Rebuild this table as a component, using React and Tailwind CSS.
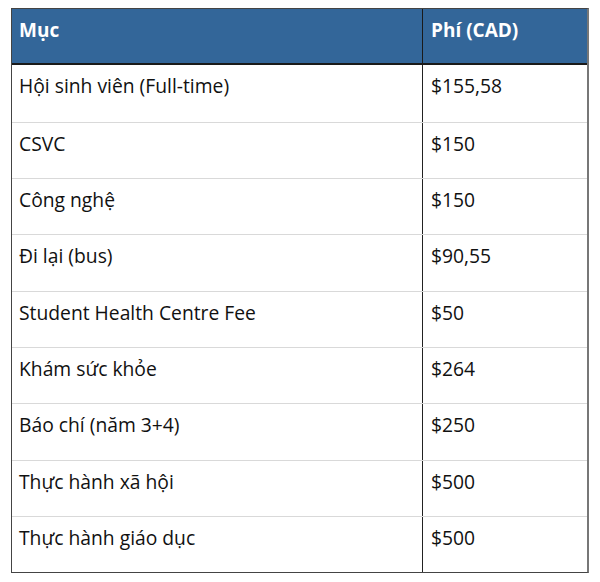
const rows = [
  { item: 'Hội sinh viên (Full-time)', fee: '$155,58', h: 'h-[57px]' },
  { item: 'CSVC', fee: '$150', h: 'h-[56px]' },
  { item: 'Công nghệ', fee: '$150', h: 'h-[56px]' },
  { item: 'Đi lại (bus)', fee: '$90,55', h: 'h-[57px]' },
  { item: 'Student Health Centre Fee', fee: '$50', h: 'h-[56px]' },
  { item: 'Khám sức khỏe', fee: '$264', h: 'h-[56px]' },
  { item: 'Báo chí (năm 3+4)', fee: '$250', h: 'h-[57px]' },
  { item: 'Thực hành xã hội', fee: '$500', h: 'h-[56px]' },
  { item: 'Thực hành giáo dục', fee: '$500', h: 'h-[56px]' },
];

export default function App() {
  return (
    <div className="w-[600px] h-[582px] bg-white pt-[8px] pl-[11px] font-['Open_Sans',sans-serif] text-[19.3px] text-[#111]">
      <div className="w-[578px] border-l border-t border-b border-[#444] border-r-2 border-r-[#777]">
        {/* Header */}
        <div className="flex h-[56px] bg-[#336699] border-b-2 border-[#1a1a1a] text-white font-bold text-[19px]">
          <div className="w-[411px] border-r border-[#1a1a1a] pl-[7px] pt-[9px] leading-[24px]">Mục</div>
          <div className="flex-1 pl-[8px] pt-[9px] leading-[24px]">Phí (CAD)</div>
        </div>

        {/* Rows */}
        {rows.map((r, i) => (
          <div
            key={i}
            className={`flex ${r.h} ${i > 0 ? 'border-t border-[#d9d9d9]' : ''}`}
          >
            <div className="w-[411px] border-r border-[#222] pl-[7px] pt-[9px] leading-[24px]">{r.item}</div>
            <div className="flex-1 pl-[8px] pt-[9px] leading-[24px]">{r.fee}</div>
          </div>
        ))}
      </div>
    </div>
  );
}
